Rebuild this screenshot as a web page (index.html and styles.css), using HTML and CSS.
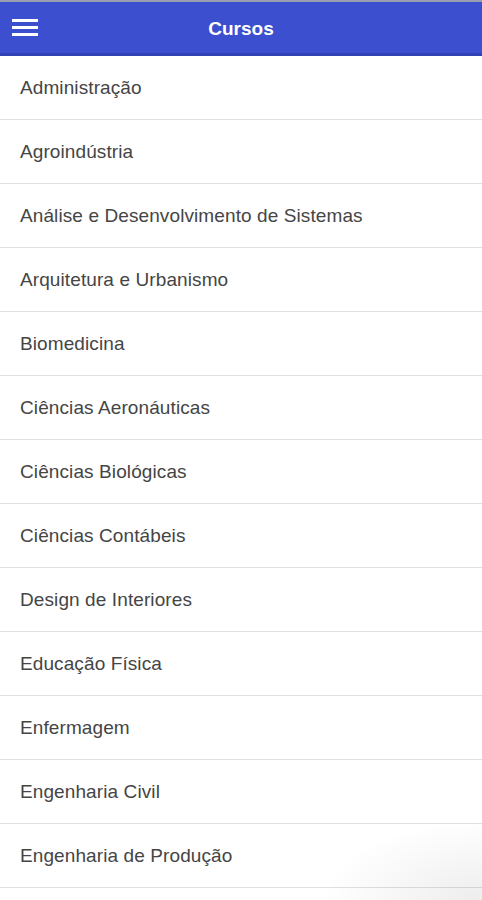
FILE: index.html
```html
<!DOCTYPE html>
<html lang="pt">
<head>
<meta charset="utf-8">
<title>Cursos</title>
<link rel="stylesheet" href="styles.css">
</head>
<body>
<div class="app">
  <header class="bar">
    <button class="menu" aria-label="Menu">
      <svg width="26" height="18" viewBox="0 0 26 18"><g fill="#fff"><rect x="0" y="1" width="26" height="3"/><rect x="0" y="8" width="26" height="3"/><rect x="0" y="15" width="26" height="3"/></g></svg>
    </button>
    <h1 class="title">Cursos</h1>
  </header>
  <ul class="list">
    <li class="item">Administração</li>
    <li class="item">Agroindústria</li>
    <li class="item">Análise e Desenvolvimento de Sistemas</li>
    <li class="item">Arquitetura e Urbanismo</li>
    <li class="item">Biomedicina</li>
    <li class="item">Ciências Aeronáuticas</li>
    <li class="item">Ciências Biológicas</li>
    <li class="item">Ciências Contábeis</li>
    <li class="item">Design de Interiores</li>
    <li class="item">Educação Física</li>
    <li class="item">Enfermagem</li>
    <li class="item">Engenharia Civil</li>
    <li class="item">Engenharia de Produção</li>
  </ul>
  <div class="shade"></div>
</div>
</body>
</html>
```
FILE: styles.css
```css
html, body {
  margin: 0;
  padding: 0;
  background: #fff;
  overflow: hidden;
}
body {
  font-family: "Liberation Sans", Arial, sans-serif;
  height: 900px;
}
.app {
  position: relative;
  display: flex;
  flex-direction: column;
  height: 900px;
}
.bar {
  position: relative;
  display: flex;
  align-items: center;
  justify-content: center;
  box-sizing: border-box;
  height: 56px;
  padding-top: 3px;
  flex: none;
  background: #3c4fcf;
  border-top: 2px solid #9a9cb0;
  border-bottom: 3px solid #3042b6;
}
.menu {
  position: absolute;
  left: 12px;
  top: 16px;
  padding: 0;
  border: 0;
  background: none;
  display: flex;
}
.title {
  margin: 0;
  color: #fff;
  font-size: 19px;
  font-weight: bold;
}
.list {
  list-style: none;
  margin: 0;
  padding: 0;
}
.item {
  height: 63px;
  display: flex;
  align-items: center;
  padding-left: 20px;
  font-size: 19px;
  letter-spacing: 0.1px;
  color: #454545;
  border-bottom: 1px solid #e0e0e0;
}
.shade {
  position: absolute;
  right: 0;
  bottom: 0;
  width: 160px;
  height: 80px;
  pointer-events: none;
  background: radial-gradient(ellipse at 100% 100%, rgba(0,0,0,0.07), rgba(0,0,0,0) 70%);
}
```
